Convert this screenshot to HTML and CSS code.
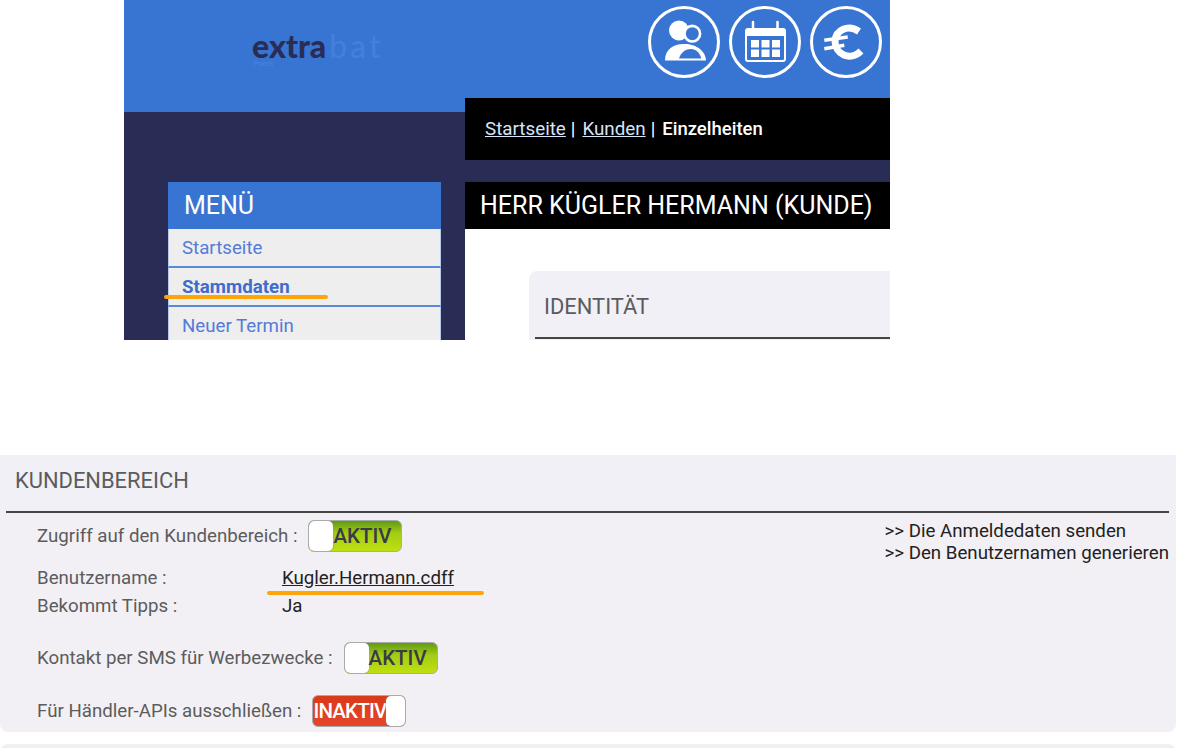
FILE: index.html
```html
<!DOCTYPE html>
<html lang="de">
<head>
    <meta charset="UTF-8">
    <title>Extrabat - Kundenbereich</title>
    <link rel="stylesheet" href="styles.css">
</head>
<body>
    <div class="shot-top">
        <header class="top-header">
            <div class="logo">
                <div class="logo-name"><span class="logo-dark">extra</span><span class="logo-light">bat</span></div>
                <div class="logo-sub">Pools</div>
            </div>
            <div class="top-icons">
                <a class="round-icon" href="#">
                    <svg viewBox="0 0 72 72" width="72" height="72">
                        <circle cx="36" cy="36" r="34.500" fill="none" stroke="#fff" stroke-width="3"/>
                        <circle cx="31" cy="24.500" r="10" fill="#fff"/>
                        <circle cx="44.300" cy="27.700" r="7.800" fill="#3875d3" stroke="#fff" stroke-width="2.600"/>
                        <path d="M17 54.500C17 43 26 38 35 38C46 37 58 44 58 54.500Z" fill="#fff"/>
                        <path d="M31 52.500C33 46 38 43 43 43C48 43 52 47 53.300 52.500Z" fill="#3875d3"/>
                    </svg>
                </a>
                <a class="round-icon" href="#">
                    <svg viewBox="0 0 72 72" width="72" height="72">
                        <circle cx="36" cy="36" r="34.500" fill="none" stroke="#fff" stroke-width="3"/>
                        <rect x="17" y="23" width="39" height="32" rx="2" fill="none" stroke="#fff" stroke-width="2"/>
                        <rect x="17" y="23" width="39" height="7" fill="#fff"/>
                        <path d="M24 16V26M48.500 16V26" stroke="#fff" stroke-width="2.500" stroke-linecap="round"/>
                        <path d="M22 34h8v7.500h-8zM32.500 34h8v7.500h-8zM43 34h8v7.500h-8zM22 43.500h8v7.500h-8zM32.500 43.500h8v7.500h-8zM43 43.500h8v7.500h-8z" fill="#fff"/>
                    </svg>
                </a>
                <a class="round-icon" href="#">
                    <svg viewBox="0 0 72 72" width="72" height="72">
                        <circle cx="36" cy="36" r="34.500" fill="none" stroke="#fff" stroke-width="3"/>
                        <path d="M49 25.500C38 18 26 24 25 35C25 48 40 56 51 45" fill="none" stroke="#fff" stroke-width="7"/>
                        <path d="M14.300 34.300L37.700 31M14.300 42.700L34.300 39.300" stroke="#fff" stroke-width="3.500"/>
                    </svg>
                </a>
            </div>
        </header>
        <div class="top-body">
            <aside class="side-menu">
                <h2>MENÜ</h2>
                <a class="menu-item" href="#">Startseite</a>
                <a class="menu-item active" href="#">Stammdaten</a>
                <a class="menu-item" href="#">Neuer Termin</a>
                <span class="marker marker-menu"></span>
            </aside>
            <main class="top-main">
                <div class="breadcrumb">
                    <a href="#">Startseite</a><span class="sep">|</span><a href="#">Kunden</a><span class="sep">|</span><b>Einzelheiten</b>
                </div>
                <h1 class="page-title">HERR KÜGLER HERMANN (KUNDE)</h1>
                <div class="page-content">
                    <section class="identity-card">
                        <h3>IDENTITÄT</h3>
                    </section>
                </div>
            </main>
        </div>
    </div>

    <section class="area-card">
        <div class="area-head">
            <h3 class="area-title">KUNDENBEREICH</h3>
        </div>
        <div class="area-body">
            <div class="area-fields">
                <div class="field field-access">
                    <span class="field-label">Zugriff auf den Kundenbereich :</span>
                    <span class="toggle on"><i></i><em>AKTIV</em></span>
                </div>
                <div class="field field-user">
                    <span class="field-label wide">Benutzername :</span>
                    <a class="field-value" href="#">Kugler.Hermann.cdff</a>
                    <span class="marker marker-user"></span>
                </div>
                <div class="field field-tips">
                    <span class="field-label wide">Bekommt Tipps :</span>
                    <span class="field-value">Ja</span>
                </div>
                <div class="field field-sms">
                    <span class="field-label">Kontakt per SMS für Werbezwecke :</span>
                    <span class="toggle on"><i></i><em>AKTIV</em></span>
                </div>
                <div class="field field-api">
                    <span class="field-label">Für Händler-APIs ausschließen :</span>
                    <span class="toggle off"><em>INAKTIV</em><i></i></span>
                </div>
            </div>
            <div class="area-links">
                <div>&gt;&gt; <a href="#">Die Anmeldedaten senden</a></div>
                <div>&gt;&gt; <a href="#">Den Benutzernamen generieren</a></div>
            </div>
        </div>
    </section>
    <div class="next-card"></div>
</body>
</html>
```

FILE: styles.css
```css
:root {
    --blue: #3875d3; --navy: #292d55; --card: #f3f0f5; --card-head: #f0f0f6;
    --label: #5c5c5c; --marker: #ffa50a;
}
html, body { height: 748px; overflow: hidden; }
body {
    font-family: Roboto, "Liberation Sans", sans-serif;
    margin: 0; background: white; color: #222;
}
a { color: inherit; }

/* top screenshot */
.shot-top {
    width: 766px; height: 340px;
    margin: 0 0 115px 124px;
    background: var(--navy); overflow: hidden;
}
.top-header {
    height: 112px; box-sizing: border-box;
    background: var(--blue);
    display: flex; justify-content: space-between;
    padding: 6px 8px 0 128px;
}
.logo { padding-top: 27px; }
.logo-name { font-family: Lato, sans-serif; font-size: 32px; line-height: 26px; font-weight: 900; }
.logo-dark { color: var(--navy); }
.logo-light { color: #4280de; font-weight: 400; margin-left: 3px; letter-spacing: 3px; }
.logo-sub { font-size: 8px; line-height: 8px; color: #4a84dc; margin: 1px 0 0 1px; }
.top-icons { display: flex; gap: 9px; }
.round-icon { display: block; width: 72px; height: 72px; }

.top-body { display: flex; padding-left: 44px; gap: 24px; }
.side-menu { width: 273px; padding-top: 70px; position: relative; }
.side-menu h2 {
    margin: 0; height: 47px; box-sizing: border-box;
    padding-left: 16px;
    background: var(--blue); color: white;
    font-size: 25px; font-weight: 400; line-height: 48px;
}
.menu-item {
    display: block; height: 39px; box-sizing: border-box;
    padding: 7px 0 0 13px;
    background: #eee; color: #557bd6;
    font-size: 18.700px; line-height: 24px; text-decoration: none;
    border-bottom: 2px solid #5a88da;
    border-left: 1px solid #b9c8e8; border-right: 1px solid #b9c8e8;
}
.menu-item.active { font-weight: 700; color: #3f6ccb; }

.top-main { flex: 1; margin-top: -14px; }
.breadcrumb {
    height: 62px; box-sizing: border-box;
    padding-left: 20px;
    background: black; color: white;
    font-size: 18.800px; line-height: 62px;
}
.breadcrumb a { color: #d8e4f8; }
.breadcrumb b { font-weight: 500; font-size: 18.500px; }
.sep { margin: 0 7px 0 5px; }
.page-title {
    margin: 22px 0 0; height: 47px;
    padding-left: 15px;
    background: black; color: white;
    font-size: 25px; font-weight: 400; line-height: 48px;
    white-space: nowrap;
}
.page-content { height: 140px; padding: 42px 0 0 64px; background: white; box-sizing: border-box; }
.identity-card {
    height: 200px;
    background: var(--card-head); border-radius: 8px 0 0 0;
    padding: 0 0 0 6px;
}
.identity-card h3 {
    margin: 0; height: 68px; box-sizing: border-box;
    padding-left: 9px;
    color: var(--label);
    font-size: 21.900px; font-weight: 400; line-height: 72px;
    border-bottom: 2px solid #444;
}

/* annotation strokes */
.marker { position: absolute; height: 4px; background: var(--marker); border-radius: 2px; }
.marker-menu { left: -4px; top: 183px; width: 164px; }
.marker-user { left: 230px; top: 25px; width: 217px; }

/* customer area */
.area-card {
    width: 1176px; height: 277px;
    background: var(--card); border-radius: 0 0 8px 8px;
}
.area-head { background: var(--card-head); height: 56px; padding-bottom: 2px; }
.area-title {
    margin: 0 0 0 6px; width: 1163px; height: 58px; box-sizing: border-box;
    padding-left: 9px;
    color: var(--label);
    font-size: 21.900px; font-weight: 400; line-height: 52px;
    border-bottom: 2px solid #444;
}
.area-body { display: flex; justify-content: space-between; padding: 0 7px 0 37px; }
.area-fields { font-size: 18.700px; color: var(--label); }
.field { display: flex; align-items: center; position: relative; }
.field-access { height: 32px; margin-top: 7px; }
.field-user { height: 24px; margin-top: 14px; }
.field-tips { height: 24px; margin-top: 4px; }
.field-sms { height: 32px; margin-top: 24px; }
.field-api { height: 32px; margin-top: 21px; }
.field-label { margin-right: 11px; }
.field-label.wide { width: 234px; }
.field-value { color: #222; }

.toggle {
    display: flex; align-items: stretch;
    width: 94px; height: 32px; box-sizing: border-box;
    border: 1px solid #aaa; border-radius: 6px; overflow: hidden;
    font-size: 20.500px; line-height: 31px;
}
.toggle i { width: 24px; background: white; border-radius: 5px; box-shadow: 0 0 2px #888; flex: none; }
.toggle em { flex: 1; font-style: normal; font-weight: 500; text-align: center; }
.toggle.on { background: linear-gradient(#5f9a12, #a3cc14 40%, #bfe010); color: #3a3a48; }
.toggle.on em { padding-right: 10px; }
.toggle.off { background: linear-gradient(#d93a1a, #e5452a); color: white; }
.toggle.off i { width: 20px; }
.toggle.off em { letter-spacing: -0.800px; white-space: nowrap; }

.area-links { font-size: 18.700px; line-height: 22px; padding-top: 7px; color: #222; }
.area-links a { text-decoration: none; }

.next-card {
    width: 1176px; height: 10px; margin-top: 12px;
    background: #f0f0f4; border-radius: 8px 8px 0 0;
}
```
